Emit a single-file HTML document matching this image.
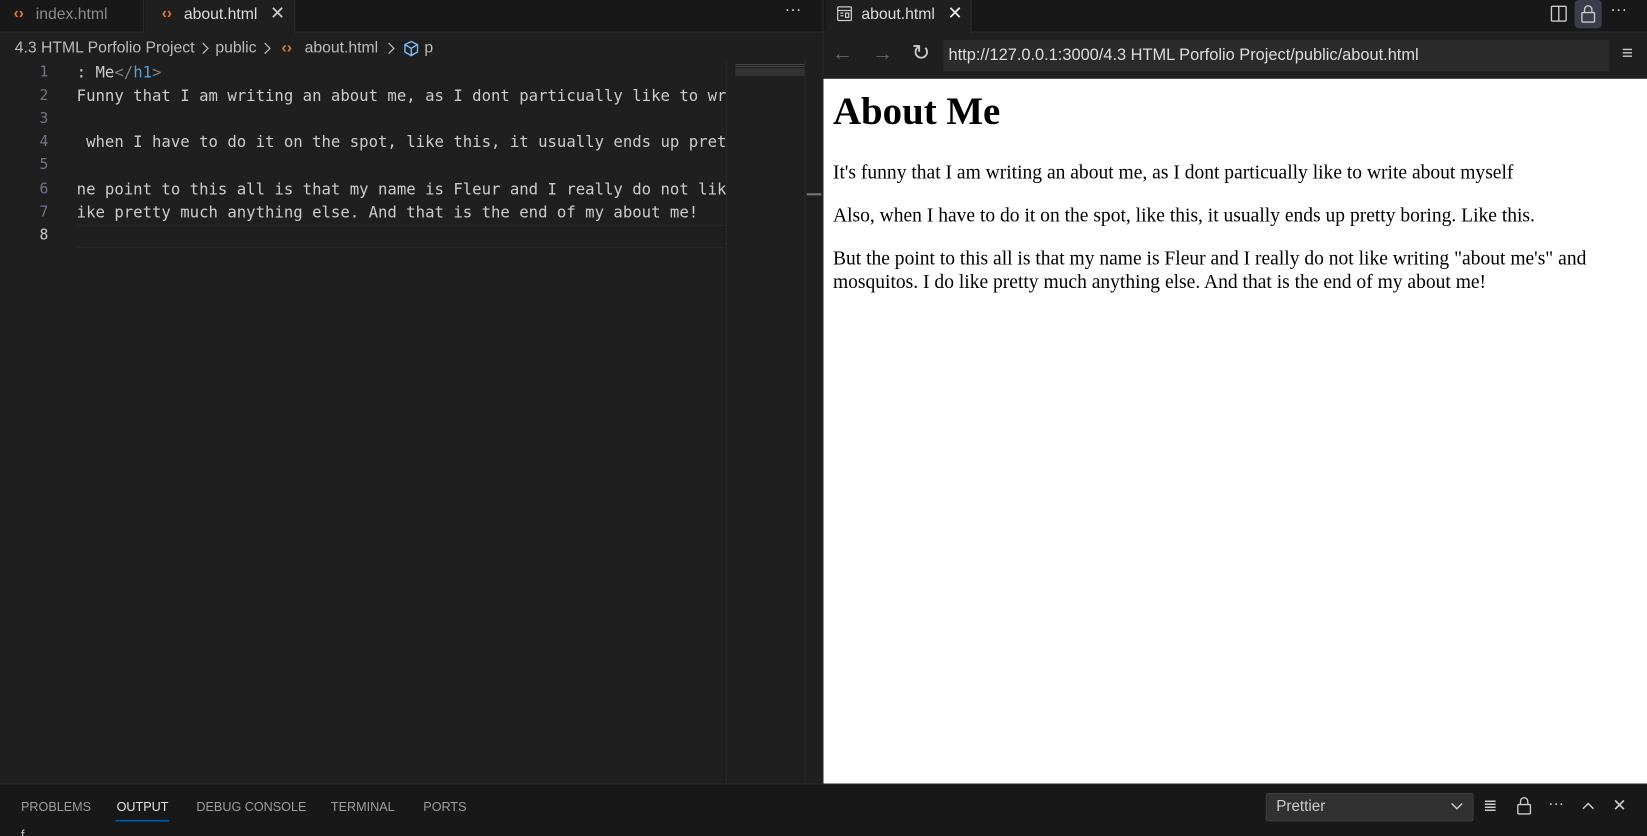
<!DOCTYPE html>
<html><head><meta charset="utf-8"><style>
*{margin:0;padding:0;box-sizing:border-box}
html,body{width:1647px;height:836px;overflow:hidden;background:#1f1f1f}
#w{width:1568px;height:796px;position:relative;transform:scale(1.0504,1.0503);transform-origin:0 0;font-family:"Liberation Sans",sans-serif;color:#ccc}
.a{position:absolute}
.mono{font-family:"DejaVu Sans Mono","Liberation Mono",monospace;font-size:14.9px;white-space:pre}
.ln{position:absolute;left:22px;width:24px;text-align:right;color:#6e7681;font-family:"DejaVu Sans Mono",monospace;font-size:14px}
.cl{position:absolute;left:73px;color:#ccc}
.serif{font-family:"Liberation Serif",serif;color:#000}
.pt{position:absolute;top:761px;font-size:12px;color:#9d9d9d}
.bc{position:absolute;top:37px;font-size:15px;color:#bbb;white-space:nowrap}
.sep{position:absolute;top:40px}
</style></head><body><div id="w">
<div class="a" style="left:0;top:0;width:783px;height:31px;background:#181818;border-bottom:1px solid #2b2b2b"></div>
<div class="a" style="left:0;top:0;width:137px;height:31px;border-right:1px solid #2b2b2b"></div>
<div class="a" style="left:13px;top:5px;font-size:14.5px;color:#e37933;font-weight:bold">‹›</div>
<div class="a" style="left:34px;top:5px;font-size:15px;color:#8b8b8b">index.html</div>
<div class="a" style="left:138px;top:0;width:143px;height:32px;background:#1f1f1f;border-right:1px solid #2b2b2b"></div>
<div class="a" style="left:154px;top:5px;font-size:14.5px;color:#e37933;font-weight:bold">‹›</div>
<div class="a" style="left:175px;top:5px;font-size:15px;color:#ddd">about.html</div>
<div class="a" style="left:257px;top:3px;font-size:17px;color:#ccc">✕</div>
<div class="a" style="left:747px;top:1px;font-size:16px;color:#ccc">···</div>
<div class="bc" style="left:14px">4.3 HTML Porfolio Project</div>
<svg class="sep" style="left:191px" width="8" height="12" viewBox="0 0 8 12" fill="none" stroke="#bbb" stroke-width="1.2"><path d="M2 1l5 5-5 5"/></svg>
<div class="bc" style="left:205px">public</div>
<svg class="sep" style="left:250px" width="8" height="12" viewBox="0 0 8 12" fill="none" stroke="#bbb" stroke-width="1.2"><path d="M2 1l5 5-5 5"/></svg>
<div class="bc" style="left:268px;color:#e37933;font-weight:bold">‹›</div>
<div class="bc" style="left:290px">about.html</div>
<svg class="sep" style="left:368px" width="8" height="12" viewBox="0 0 8 12" fill="none" stroke="#bbb" stroke-width="1.2"><path d="M2 1l5 5-5 5"/></svg>
<svg class="a" style="left:383px;top:38px" width="17" height="17" viewBox="0 0 17 17" fill="none" stroke="#75beff" stroke-width="1.3"><path d="M8.5 1.5l6 3v7l-6 3.5-6-3.5v-7z M2.5 4.5l6 3.5 6-3.5 M8.5 8v7"/></svg>
<div class="bc" style="left:404px">p</div>
<div class="mono">
<div class="ln" style="top:61px">1</div><div class="cl" style="top:60px">: Me<span style="color:#808080">&lt;/</span><span style="color:#569cd6">h1</span><span style="color:#808080">&gt;</span></div>
<div class="ln" style="top:83px">2</div><div class="cl" style="top:82px">Funny that I am writing an about me, as I dont particually like to wr</div>
<div class="ln" style="top:105px">3</div>
<div class="ln" style="top:127px">4</div><div class="cl" style="top:126px"> when I have to do it on the spot, like this, it usually ends up pret</div>
<div class="ln" style="top:149px">5</div>
<div class="ln" style="top:172px">6</div><div class="cl" style="top:171px">ne point to this all is that my name is Fleur and I really do not lik</div>
<div class="ln" style="top:194px">7</div><div class="cl" style="top:193px">ike pretty much anything else. And that is the end of my about me!</div>
<div class="ln" style="top:216px;color:#ccc">8</div>
</div>
<div class="a" style="left:73px;top:214px;width:618px;height:22px;border-top:1px solid #282828;border-bottom:1px solid #282828"></div>
<div class="a" style="left:691px;top:58px;width:76px;height:688px;background:#1f1f1f"></div>
<div class="a" style="left:691px;top:58px;width:1px;height:688px;background:#2a2a2a"></div>
<div class="a" style="left:700px;top:60px;width:66px;height:12px;background:repeating-linear-gradient(#1f1f1f 0 1px,#555 1px 2px);opacity:.7"></div>
<div class="a" style="left:766px;top:58px;width:1px;height:688px;background:#2a2a2a"></div>
<div class="a" style="left:768px;top:184px;width:14px;height:2px;background:#777"></div>
<div class="a" style="left:783px;top:0;width:1px;height:746px;background:#2b2b2b"></div>
<div class="a" style="left:784px;top:0;width:784px;height:31px;background:#181818;border-bottom:1px solid #2b2b2b"></div>
<div class="a" style="left:786px;top:0;width:139px;height:32px;background:#1f1f1f;border-right:1px solid #2b2b2b"></div>
<svg class="a" style="left:796px;top:5px" width="16" height="16" viewBox="0 0 16 16" fill="none" stroke="#ccc" stroke-width="1.2"><rect x="1.5" y="1.5" width="13" height="13" rx="1"/><path d="M1.5 5h13M4 7.5h3M4 10h3M9 7.5h3v4H9z"/></svg>
<div class="a" style="left:820px;top:5px;font-size:15px;color:#ddd">about.html</div>
<div class="a" style="left:902px;top:3px;font-size:17px;color:#eee">✕</div>
<svg class="a" style="left:1475px;top:4px" width="18" height="18" viewBox="0 0 18 18" fill="none" stroke="#ccc" stroke-width="1.3"><rect x="2" y="2" width="14" height="14" rx="1"/><path d="M9 2v14"/></svg>
<div class="a" style="left:1499px;top:0;width:26px;height:27px;background:#3a3d4a;border-radius:4px"></div>
<svg class="a" style="left:1503px;top:3px" width="18" height="20" viewBox="0 0 18 20" fill="none" stroke="#ccc" stroke-width="1.3"><rect x="3" y="9" width="12" height="9" rx="1"/><path d="M5.5 9V6a3.5 3.5 0 0 1 7 0v3"/></svg>
<div class="a" style="left:1533px;top:1px;font-size:16px;color:#ccc">···</div>
<div class="a" style="left:784px;top:32px;width:784px;height:43px;background:#1f1f1f"></div>
<div class="a" style="left:792px;top:40px;font-size:20px;color:#666">←</div>
<div class="a" style="left:830px;top:40px;font-size:20px;color:#666">→</div>
<div class="a" style="left:868px;top:38px;font-size:21px;color:#ccc">↻</div>
<div class="a" style="left:898px;top:38px;width:634px;height:30px;background:#2b2b2b"></div>
<div class="a" style="left:903px;top:44px;font-size:15.6px;color:#ddd;white-space:nowrap">http://127.0.0.1:3000/4.3 HTML Porfolio Project/public/about.html</div>
<div class="a" style="left:1544px;top:40px;font-size:18px;color:#ccc">≡</div>
<div class="a" style="left:784px;top:75px;width:784px;height:671px;background:#fff"></div>
<div class="a serif" style="left:793px;top:85px;font-size:37px;font-weight:bold;white-space:nowrap">About Me</div>
<div class="a serif" style="left:793px;top:154px;font-size:18.6px;line-height:22px;width:760px">It's funny that I am writing an about me, as I dont particually like to write about myself</div>
<div class="a serif" style="left:793px;top:195px;font-size:18.6px;line-height:22px;width:760px">Also, when I have to do it on the spot, like this, it usually ends up pretty boring. Like this.</div>
<div class="a serif" style="left:793px;top:236px;font-size:18.6px;line-height:22px;width:760px">But the point to this all is that my name is Fleur and I really do not like writing "about me's" and mosquitos. I do like pretty much anything else. And that is the end of my about me!</div>
<div class="a" style="left:0;top:746px;width:1568px;height:50px;background:#181818;border-top:1px solid #2b2b2b"></div>
<div class="pt" style="left:20px">PROBLEMS</div>
<div class="pt" style="left:111px;color:#e7e7e7">OUTPUT</div>
<div class="a" style="left:110px;top:781px;width:51px;height:1px;background:#0078d4"></div>
<div class="pt" style="left:187px">DEBUG CONSOLE</div>
<div class="pt" style="left:315px">TERMINAL</div>
<div class="pt" style="left:403px">PORTS</div>
<div class="a" style="left:1205px;top:755px;width:198px;height:27px;background:#313131;border:1px solid #3c3c3c;border-radius:2px"></div>
<div class="a" style="left:1215px;top:760px;font-size:14.5px;color:#ccc">Prettier</div>
<svg class="a" style="left:1380px;top:762px" width="14" height="12" viewBox="0 0 14 12" fill="none" stroke="#ccc" stroke-width="1.4"><path d="M2 3l5 5 5-5"/></svg>
<div class="a" style="left:1412px;top:757px;font-size:16px;color:#ccc">≣</div>
<svg class="a" style="left:1443px;top:757px" width="16" height="20" viewBox="0 0 16 20" fill="none" stroke="#ccc" stroke-width="1.3"><rect x="2" y="9" width="12" height="9" rx="1"/><path d="M4.5 9V6a3.5 3.5 0 0 1 7 0v3"/></svg>
<div class="a" style="left:1474px;top:757px;font-size:15px;color:#ccc">···</div>
<svg class="a" style="left:1505px;top:761px" width="14" height="12" viewBox="0 0 14 12" fill="none" stroke="#ccc" stroke-width="1.4"><path d="M2 9l5-5 5 5"/></svg>
<div class="a" style="left:1535px;top:757px;font-size:16px;color:#ccc">✕</div>
<div class="a" style="left:20px;top:788px;font-size:12px;color:#ccc">f</div>
</div></body></html>
